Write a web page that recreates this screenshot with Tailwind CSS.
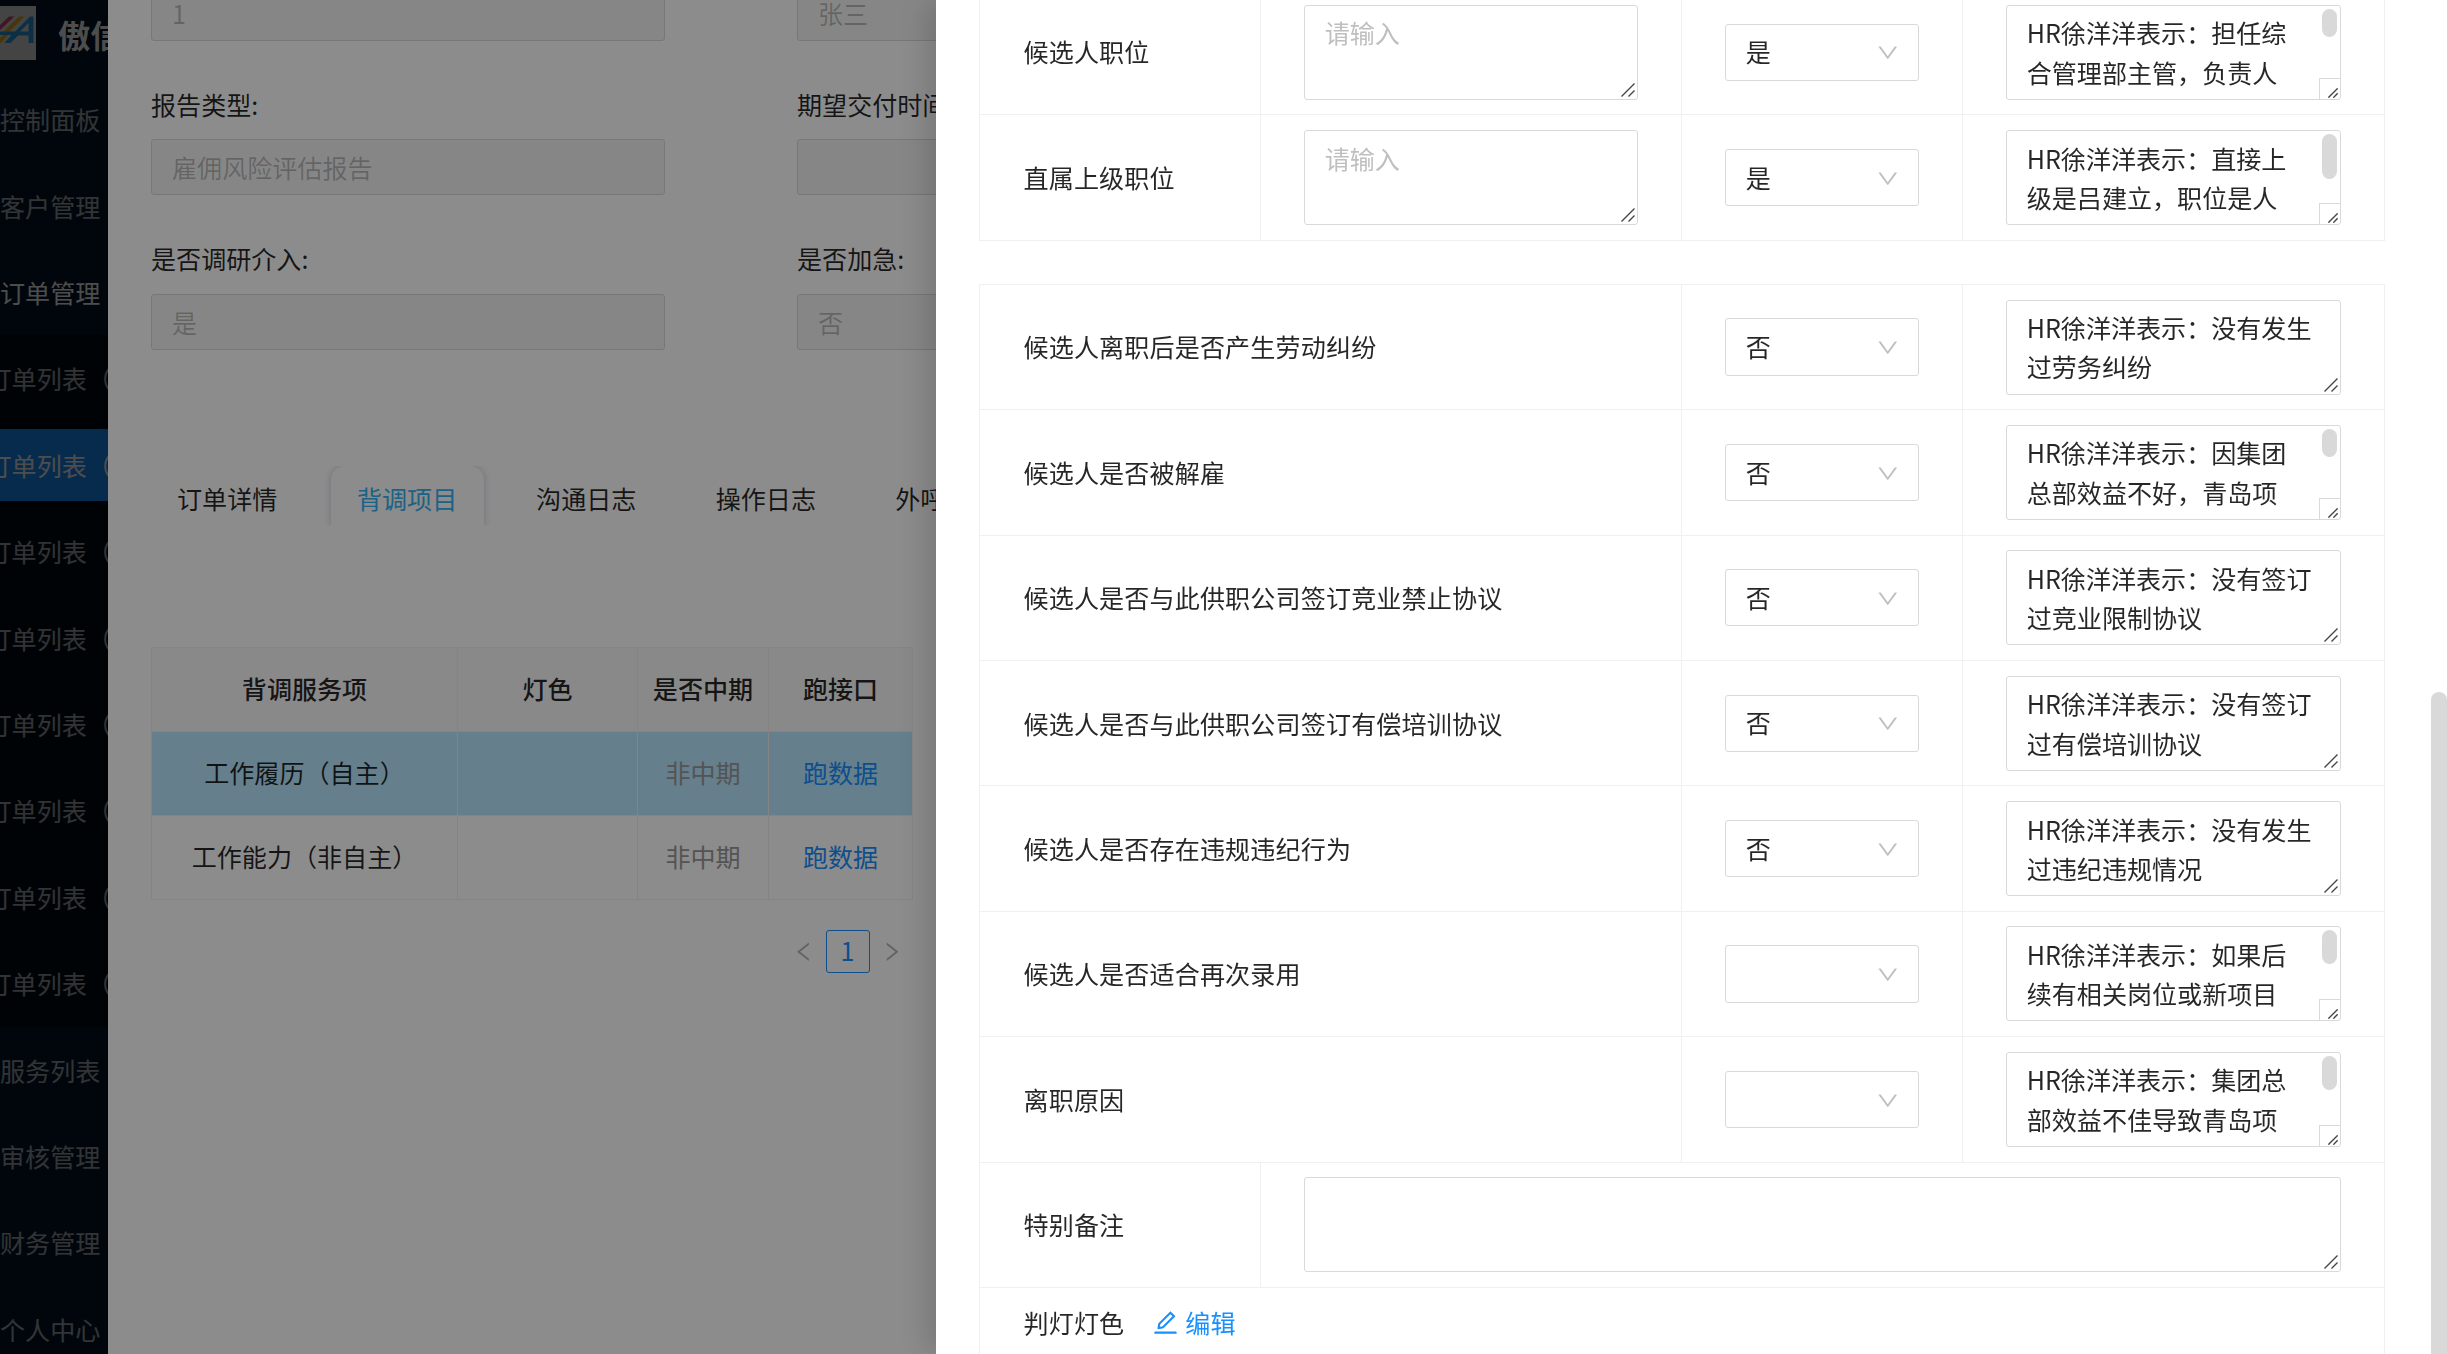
<!DOCTYPE html>
<html lang="zh-CN">
<head>
    <meta charset="UTF-8">
    <meta name="viewport" content="width=device-width, initial-scale=1.0">
    <title>订单管理 - 背调项目</title>
    <script src="https://cdn.jsdelivr.net/npm/@tailwindcss/browser@4"></script>
</head>
<body class="h-[1354px] overflow-hidden bg-white font-['Noto_Sans_CJK_SC',sans-serif] text-[25.07px] leading-[39.4px] text-black/85">
    <svg class="hidden">
        <symbol id="icon-down" viewBox="64 64 896 896"><path d="M884 256h-75c-5.1 0-9.9 2.5-12.9 6.6L512 654.2 227.9 262.6c-3-4.1-7.8-6.6-12.9-6.6h-75c-6.5 0-10.3 7.4-6.5 12.7l352.6 486.1c12.8 17.6 39 17.6 51.7 0l352.6-486.1c3.9-5.3.1-12.7-6.4-12.7z"/></symbol>
        <symbol id="icon-left" viewBox="64 64 896 896"><path d="M724 218.3V141c0-6.7-7.7-10.4-12.9-6.3L260.3 486.8a31.86 31.86 0 000 50.3l450.8 352.1c5.3 4.1 12.9.4 12.9-6.3v-77.3c0-4.9-2.3-9.6-6.1-12.6l-360-281 360-281.1c3.8-3 6.1-7.7 6.1-12.6z"/></symbol>
        <symbol id="icon-right" viewBox="64 64 896 896"><path d="M765.7 486.8L314.9 134.7A7.97 7.97 0 00302 141v77.3c0 4.9 2.3 9.6 6.1 12.6l360 281.1-360 281.1c-3.9 3-6.1 7.7-6.1 12.6V883c0 6.7 7.7 10.4 12.9 6.3l450.8-352.1a31.96 31.96 0 000-50.4z"/></symbol>
        <symbol id="icon-edit" viewBox="64 64 896 896"><path d="M257.7 752c2 0 4-.2 6-.5L431.9 722c2-.4 3.9-1.3 5.3-2.8l423.9-423.9a9.96 9.96 0 000-14.1L694.9 114.9c-1.9-1.9-4.4-2.9-7.1-2.9s-5.2 1-7.1 2.9L256.8 538.8c-1.5 1.5-2.4 3.3-2.8 5.3l-29.5 168.2a33.5 33.5 0 009.4 29.8c6.6 6.4 14.9 9.9 23.8 9.9zm67.4-174.4L687.8 215l73.3 73.3-362.7 362.6-88.9 15.7 15.6-89zM880 836H144c-17.7 0-32 14.3-32 32v36c0 4.4 3.6 8 8 8h784c4.4 0 8-3.6 8-8v-36c0-17.7-14.3-32-32-32z"/></symbol>
        <symbol id="grip" viewBox="0 0 14 14"><path d="M.5 13.5l13-13M7.5 13.5l6-6" fill="none" stroke="#444" stroke-width="1.4" vector-effect="non-scaling-stroke"/></symbol>
    </svg>

    <div class="flex h-full">
        <!-- 侧边菜单 -->
        <aside class="relative w-[108px] shrink-0 overflow-hidden whitespace-nowrap bg-[#001529] text-white/65">
            <div class="flex h-[76.3px] items-start pt-[6px]">
                <svg class="h-[54px] w-[36px] shrink-0" viewBox="0 0 36 54">
                    <rect width="36" height="54" fill="#e4e2e2"/>
                    <path d="M0 19L9 10.500h5.500L0 24z" fill="#e0457b"/>
                    <path d="M3 26L19 10.500h5.500L9 26zM0 32l3-3h5l-7 8H0z" fill="#f0b323"/>
                    <path d="M0 25.500h15L30 10.500h3.500V37h-5v-7.500H18L10.500 37H4.500l7-8H0zM20 25.500h8.500V17z" fill="#2a9fe0" fill-rule="evenodd"/>
                </svg>
                <span class="ml-[22px] mt-[4px] text-[32.2px] font-bold leading-[48px] text-white">傲信</span>
            </div>
            <div class="h-[86.4px] leading-[86.4px]">控制面板</div>
            <div class="h-[86.4px] leading-[86.4px]">客户管理</div>
            <div class="h-[86.4px] leading-[86.4px] text-white">订单管理</div>
            <div class="bg-[#000c17]">
                <div class="h-[86.4px] -indent-[13.5px] leading-[86.4px]">订单列表（</div>
                <div class="flex h-[86.4px] items-center"><div class="h-[72px] w-full bg-[#1890ff] -indent-[13.5px] leading-[72px] text-white">订单列表（</div></div>
                <div class="h-[86.4px] -indent-[13.5px] leading-[86.4px]">订单列表（</div>
                <div class="h-[86.4px] -indent-[13.5px] leading-[86.4px]">订单列表（</div>
                <div class="h-[86.4px] -indent-[13.5px] leading-[86.4px]">订单列表（</div>
                <div class="h-[86.4px] -indent-[13.5px] leading-[86.4px]">订单列表（</div>
                <div class="h-[86.4px] -indent-[13.5px] leading-[86.4px]">订单列表（</div>
                <div class="h-[86.4px] -indent-[13.5px] leading-[86.4px]">订单列表（</div>
            </div>
            <div class="h-[86.4px] leading-[86.4px]">服务列表</div>
            <div class="h-[86.4px] leading-[86.4px]">审核管理</div>
            <div class="h-[86.4px] leading-[86.4px]">财务管理</div>
            <div class="h-[86.4px] leading-[86.4px]">个人中心</div>
            <div class="absolute inset-0 bg-black/45"></div>
        </aside>

        <!-- 订单内容 -->
        <main class="w-[828px] shrink-0 overflow-hidden whitespace-nowrap pl-[43px]">
            <div class="-mt-[15px] grid grid-cols-[514px_514px] gap-x-[132px]">
                <div class="h-[56px] rounded-[3px] border border-[#d9d9d9] bg-[#f5f5f5] pl-[20px] leading-[54px] text-black/25">1</div>
                <div class="h-[56px] rounded-[3px] border border-[#d9d9d9] bg-[#f5f5f5] pl-[20px] leading-[54px] text-black/25">张三</div>
                <div class="mt-[44px] h-[54px]">报告类型:</div>
                <div class="mt-[44px] h-[54px]">期望交付时间:</div>
                <div class="h-[56px] rounded-[3px] border border-[#d9d9d9] bg-[#f5f5f5] pl-[20px] leading-[55px] text-black/25">雇佣风险评估报告</div>
                <div class="h-[56px] rounded-[3px] border border-[#d9d9d9] bg-[#f5f5f5]"></div>
                <div class="mt-[44px] h-[55px]">是否调研介入:</div>
                <div class="mt-[44px] h-[55px]">是否加急:</div>
                <div class="h-[56px] rounded-[3px] border border-[#d9d9d9] bg-[#f5f5f5] pl-[20px] leading-[55px] text-black/25">是</div>
                <div class="h-[56px] rounded-[3px] border border-[#d9d9d9] bg-[#f5f5f5] pl-[20px] leading-[55px] text-black/25">否</div>
            </div>

            <div class="mt-[116px] flex h-[60px] overflow-hidden leading-[64px]">
                <div class="w-[179.6px] shrink-0 pl-[26px]">订单详情</div>
                <div class="w-[153px] shrink-0 rounded-t-[14px] text-center text-[#36b3f0] shadow-[0_0_7px_rgba(60,60,130,0.25)]">背调项目</div>
                <div class="ml-[52.500px] w-[179.6px] shrink-0">沟通日志</div>
                <div class="w-[179.6px] shrink-0">操作日志</div>
                <div class="shrink-0">外呼日志</div>
            </div>

            <table class="mt-[120.500px] h-[252px] w-[761px] table-fixed border-collapse text-center">
                <colgroup><col class="w-[306px]"><col class="w-[180px]"><col class="w-[131px]"><col class="w-[144px]"></colgroup>
                <tr class="h-[84px] bg-[#fafafa]">
                    <th class="border border-[#f0f0f0] font-medium">背调服务项</th>
                    <th class="border border-[#f0f0f0] font-medium">灯色</th>
                    <th class="border border-[#f0f0f0] font-medium">是否中期</th>
                    <th class="border border-[#f0f0f0] font-medium">跑接口</th>
                </tr>
                <tr class="h-[84px] bg-[#bae7ff]">
                    <td class="border border-[#f0f0f0]">工作履历（自主）</td>
                    <td class="border border-[#f0f0f0]"></td>
                    <td class="border border-[#f0f0f0] text-[#999]">非中期</td>
                    <td class="border border-[#f0f0f0] text-[#1890ff]">跑数据</td>
                </tr>
                <tr class="h-[84px]">
                    <td class="border border-[#f0f0f0]">工作能力（非自主）</td>
                    <td class="border border-[#f0f0f0]"></td>
                    <td class="border border-[#f0f0f0] text-[#999]">非中期</td>
                    <td class="border border-[#f0f0f0] text-[#1890ff]">跑数据</td>
                </tr>
            </table>

            <div class="mt-[30.500px] flex h-[43px] w-[761px] items-center justify-end text-black/30">
                <svg class="h-[21.5px] w-[21.5px] fill-current"><use href="#icon-left"/></svg>
                <div class="mx-[11px] h-[43px] w-[44px] rounded-[3px] border border-[#1890ff] text-center leading-[38px] text-[#1890ff]">1</div>
                <svg class="mr-[10px] h-[21.5px] w-[21.5px] fill-current"><use href="#icon-right"/></svg>
            </div>
        </main>
    </div>

    <div class="fixed inset-0 bg-black/45"></div>

    <!-- 抽屉 -->
    <section class="fixed inset-y-0 right-0 w-[1511px] overflow-hidden bg-white pl-[43px] shadow-[-11px_0_29px_rgba(0,0,0,0.15)]">
        <div id="jobs" class="-mt-[11px] w-[1405.500px] border-x border-b border-[#f0f0f0]"></div>
        <div class="mt-[43.15px] w-[1405.500px] border-x border-[#f0f0f0]">
            <div id="questions"></div>
            <div class="grid h-[125.375px] grid-cols-[281px_1fr] border-t border-[#f0f0f0]">
                <div class="flex items-center border-r border-[#f0f0f0] pl-[43.500px] tracking-[0.14px]">特别备注</div>
                <div class="flex items-center px-[43px]">
                    <div class="relative h-[95px] w-full rounded-[3px] border border-[#d9d9d9]">
                        <svg class="absolute bottom-[2px] right-[2px] h-[14px] w-[14px]"><use href="#grip"/></svg>
                    </div>
                </div>
            </div>
            <div class="flex h-[70px] items-center border-t border-[#f0f0f0] pl-[43.500px] tracking-[0.14px]">
                判灯灯色
                <a class="ml-[29px] flex items-center gap-[7px] text-[#1890ff]">
                    <svg class="h-[25px] w-[25px] fill-current"><use href="#icon-edit"/></svg>编辑
                </a>
            </div>
        </div>
        <div class="absolute right-0 top-[692px] h-[700px] w-[16px] rounded-full bg-[#d9d9d9]"></div>
    </section>

    <script>
        // thumb: 文本域滚动条高度，0 表示没有滚动条
        const jobs = [
            { label: "候选人职位", value: "是", lines: ["HR徐洋洋表示：担任综", "合管理部主管，负责人"], thumb: 28 },
            { label: "直属上级职位", value: "是", lines: ["HR徐洋洋表示：直接上", "级是吕建立，职位是人"], thumb: 45 },
        ];
        const questions = [
            { label: "候选人离职后是否产生劳动纠纷", value: "否", lines: ["HR徐洋洋表示：没有发生", "过劳务纠纷"], thumb: 0 },
            { label: "候选人是否被解雇", value: "否", lines: ["HR徐洋洋表示：因集团", "总部效益不好，青岛项"], thumb: 28 },
            { label: "候选人是否与此供职公司签订竞业禁止协议", value: "否", lines: ["HR徐洋洋表示：没有签订", "过竞业限制协议"], thumb: 0 },
            { label: "候选人是否与此供职公司签订有偿培训协议", value: "否", lines: ["HR徐洋洋表示：没有签订", "过有偿培训协议"], thumb: 0 },
            { label: "候选人是否存在违规违纪行为", value: "否", lines: ["HR徐洋洋表示：没有发生", "过违纪违规情况"], thumb: 0 },
            { label: "候选人是否适合再次录用", value: "", lines: ["HR徐洋洋表示：如果后", "续有相关岗位或新项目"], thumb: 34 },
            { label: "离职原因", value: "", lines: ["HR徐洋洋表示：集团总", "部效益不佳导致青岛项"], thumb: 34 },
        ];

        function select(value) {
            return `
                <div class="flex h-[57.3px] w-full items-center justify-between rounded-[3px] border border-[#d9d9d9] px-[19.7px]">
                    <span>${value}</span>
                    <svg class="mt-[2px] h-[21.5px] w-[21.5px] fill-black/25"><use href="#icon-down"/></svg>
                </div>`;
        }

        function textarea(item) {
            const corner = item.thumb ? `
                <div class="absolute right-[3px] top-[3px] w-[15px] rounded-full bg-[#d9d9d9]" style="height: ${item.thumb}px"></div>
                <div class="absolute bottom-0 right-0 h-[21px] w-[21px] border-l border-t border-[#d9d9d9]">
                    <svg class="absolute bottom-[1px] right-[2px] h-[10px] w-[10px]"><use href="#grip"/></svg>
                </div>` : `
                <svg class="absolute bottom-[2px] right-[2px] h-[14px] w-[14px]"><use href="#grip"/></svg>`;
            return `
                <div class="relative h-[95px] w-full whitespace-nowrap rounded-[3px] border border-[#d9d9d9] pl-[19.7px] pt-[7.500px]">
                    ${item.lines.join("<br>")}${corner}
                </div>`;
        }

        document.getElementById("jobs").innerHTML = jobs.map(item => `
            <div class="grid h-[125.375px] grid-cols-[281px_421px_281px_1fr] border-t border-[#f0f0f0]">
                <div class="flex items-center border-r border-[#f0f0f0] pl-[43.500px] tracking-[0.14px]">${item.label}</div>
                <div class="flex items-center border-r border-[#f0f0f0] px-[43px]">
                    <div class="relative h-[95px] w-full rounded-[3px] border border-[#d9d9d9] pl-[19.7px] pt-[7.500px] text-[#bfbfbf]">请输入
                        <svg class="absolute bottom-[2px] right-[2px] h-[14px] w-[14px]"><use href="#grip"/></svg>
                    </div>
                </div>
                <div class="flex items-center border-r border-[#f0f0f0] px-[43px]">${select(item.value)}</div>
                <div class="flex items-center px-[43px]">${textarea(item)}</div>
            </div>`).join("");

        document.getElementById("questions").innerHTML = questions.map(item => `
            <div class="grid h-[125.375px] grid-cols-[702px_281px_1fr] border-t border-[#f0f0f0]">
                <div class="flex items-center border-r border-[#f0f0f0] pl-[43.500px] tracking-[0.14px]">${item.label}</div>
                <div class="flex items-center border-r border-[#f0f0f0] px-[43px]">${select(item.value)}</div>
                <div class="flex items-center px-[43px]">${textarea(item)}</div>
            </div>`).join("");
    </script>
</body>
</html>
